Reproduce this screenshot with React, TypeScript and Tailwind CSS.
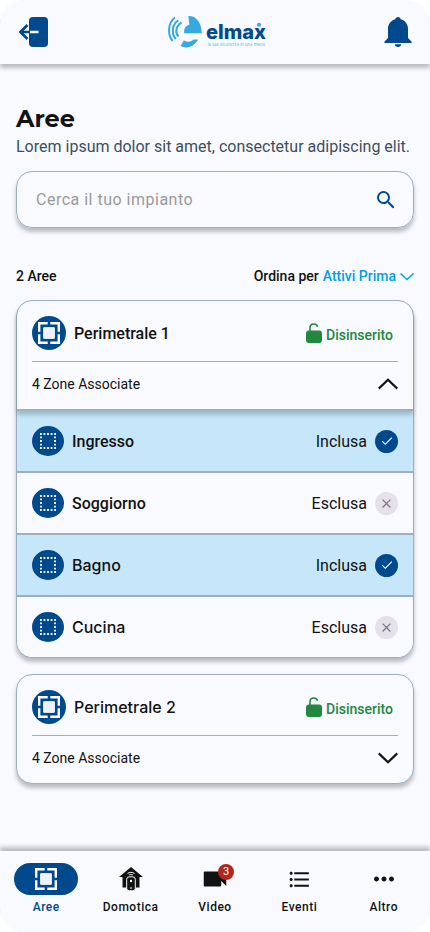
import { useState } from "react";
import clsx from "clsx";
import {
  MdCheck,
  MdClose,
  MdFormatListBulleted,
  MdMoreHoriz,
  MdSearch,
  MdVideocam,
} from "react-icons/md";

type Zone = {
  name: string;
  included: boolean;
  inter?: boolean;
};

const zones: Zone[] = [
  { name: "Ingresso", included: true },
  { name: "Soggiorno", included: false },
  { name: "Bagno", included: true, inter: true },
  { name: "Cucina", included: false, inter: true },
];

const AreaIcon = () => (
  <svg width="24" height="24" viewBox="0 0 24 24" fill="none">
    <path
      d="M10.700 2.200H2.200V10.700M13.300 2.200H21.800V10.700M21.800 13.300V21.800H13.300M10.700 21.800H2.200V13.300"
      stroke="#fff"
      strokeWidth="2.400"
    />
    <path d="M6.700 6.700h10.600v10.600H6.700z" fill="#edf1f9" stroke="#fff" />
  </svg>
);

const ZoneIcon = () => (
  <span className="flex h-[30px] w-8 items-center justify-center rounded-[50%] bg-[#00498d]">
    <svg width="16" height="16" viewBox="0 0 16 16" fill="none">
      <path
        d="M0 1H16M0 15H16"
        stroke="#fff"
        strokeWidth="1.800"
        strokeDasharray="1.800 1.750"
      />
      <path
        d="M1 3.550V13M15 3.550V13"
        stroke="#fff"
        strokeWidth="1.800"
        strokeDasharray="1.800 1.750"
      />
    </svg>
  </span>
);

const LockIcon = () => (
  <svg width="16" height="20" viewBox="0 0 16 20" fill="none">
    <rect y="7.500" width="16" height="12.500" rx="3" fill="#22873f" />
    <path
      d="M4 8V4.800C4 2.400 5.600 1 7.800 1c1.900 0 3.200 1 3.800 2.700"
      stroke="#22873f"
      strokeWidth="1.600"
    />
  </svg>
);

const Chevron = ({ up }: { up?: boolean }) => (
  <svg width="20" height="12" viewBox="0 0 20 12" fill="none">
    <path
      d={up ? "M.7 10.600 10 1.700l9.300 8.900" : "M.7 1.400 10 10.300l9.300-8.900"}
      stroke="#121212"
      strokeWidth="2.200"
    />
  </svg>
);

const Logo = () => (
  <svg className="ml-[3px] overflow-visible" width="100" height="36" viewBox="0 0 100 36">
    <g fill="none" stroke="#36a9e1" strokeWidth="2">
      <path d="M7 3.500C-.5 9-.5 21 4.700 27" />
      <path d="M10.300 6.200C3.500 11 3.500 20 7.700 25" />
      <path d="M13.500 8.700C7.500 12.500 7 18.500 10.500 22.700" />
    </g>
    <path d="M20.300 2C28 1.500 34 9 33.700 19.300H16.300C15.500 15 17.500 12 21.300 10.500Z" fill="#36a9e1" />
    <path d="M16 26.200C19 28.500 22.500 28.200 25.500 25.500H30C27 32 19 35.500 12.500 32Z" fill="#36a9e1" />
    <text
      x="38"
      y="24.500"
      textLength="60"
      lengthAdjust="spacingAndGlyphs"
      fill="#004b8d"
      fontFamily="Inter, sans-serif"
      fontWeight="800"
      fontSize="20"
    >
      elmax
    </text>
    <circle cx="91" cy="10.700" r="2" fill="#36a9e1" />
    <text
      x="39.500"
      y="31.500"
      textLength="57.500"
      lengthAdjust="spacingAndGlyphs"
      fill="#5bbce9"
      fontFamily="Inter, sans-serif"
      fontSize="4.500"
    >
      la tua sicurezza in una mano
    </text>
  </svg>
);

const Header = () => (
  <header className="z-10 flex h-16 shrink-0 items-center justify-between rounded-t-3xl bg-[#f9faff] pr-[18px] pl-[19px] shadow-[0_4px_4px_rgba(0,0,0,0.25)]">
    <button aria-label="Esci">
      <svg width="30" height="30" viewBox="0 0 30 30" fill="none">
        <rect x="10" width="19" height="30" rx="4" fill="#00498d" />
        <path d="M11 15h8.500" stroke="#fff" strokeWidth="2.600" />
        <path d="M1.500 15H11M8.500 8 1.500 15l7 7" stroke="#00498d" strokeWidth="2.700" />
      </svg>
    </button>
    <Logo />
    <button aria-label="Notifiche">
      <svg width="28" height="30" viewBox="0 0 28 30" fill="#00498d">
        <path d="M14 0c1.500 0 2.500 1 2.700 2.200C21 3.500 24 7 24 11.500V21l3.500 3.500V26H.5v-1.500L4 21v-9.500C4 7 7 3.500 11.300 2.200 11.500 1 12.500 0 14 0Z" />
        <path d="M10.700 27.200h6.600c-.3 1.700-1.600 2.800-3.300 2.800s-3-1.100-3.300-2.800Z" />
      </svg>
    </button>
  </header>
);

const ZoneRow = ({ zone, last }: { zone: Zone; last: boolean }) => (
  <div
    className={clsx(
      "flex items-center justify-between px-[15px]",
      zone.included ? "bg-[#c5e7f9]" : "bg-[#f9faff]",
      last ? "h-[60px] rounded-b-2xl" : "h-[62px] border-b-2 border-[#9aafc1]",
    )}
  >
    <div className="flex items-center gap-2">
      <ZoneIcon />
      <span className={clsx("font-medium", zone.inter ? "font-[Inter,sans-serif]" : "pt-px")}>
        {zone.name}
      </span>
    </div>
    <div className="flex items-center gap-2">
      <span className="pt-px">{zone.included ? "Inclusa" : "Esclusa"}</span>
      {zone.included ? (
        <span className="flex size-[23px] items-center justify-center rounded-full bg-[#00498d] text-white">
          <MdCheck size={14} />
        </span>
      ) : (
        <span className="flex size-[23px] items-center justify-center rounded-full bg-[#e6e0e9] text-[#7d7a80]">
          <MdClose size={15} />
        </span>
      )}
    </div>
  </div>
);

type AreaCardProps = {
  title: string;
  items: Zone[];
  defaultOpen?: boolean;
};

const AreaCard = ({ title, items, defaultOpen = false }: AreaCardProps) => {
  const [isOpen, setIsOpen] = useState(defaultOpen);

  return (
    <article className="rounded-2xl border border-[#9aafc1] bg-[#f9faff] shadow-[0_4px_4px_rgba(0,0,0,0.25)]">
      <div
        className={clsx(
          "relative px-[15px]",
          isOpen
            ? "h-[110px] rounded-t-2xl border-b-2 border-[#9aafc1] shadow-[0_4px_4px_rgba(0,0,0,0.2)]"
            : "h-[108px]",
        )}
      >
        <div className="flex h-[61px] items-center justify-between border-b border-[#9aafc1] pt-1 pr-[5px]">
          <div className="flex items-center gap-2">
            <span className="flex size-[34px] items-center justify-center rounded-full bg-[#00498d]">
              <AreaIcon />
            </span>
            <span
              className={clsx("font-medium", defaultOpen ? "pt-px" : "font-[Inter,sans-serif]")}
            >
              {title}
            </span>
          </div>
          <div className="flex items-center gap-1 text-sm font-medium text-[#22873f]">
            <LockIcon />
            <span className="pt-1">Disinserito</span>
          </div>
        </div>
        <button
          className="flex h-11 w-full items-center justify-between text-sm"
          onClick={() => setIsOpen(!isOpen)}
        >
          4 Zone Associate
          <Chevron up={isOpen} />
        </button>
      </div>
      {isOpen &&
        items.map((zone, index) => (
          <ZoneRow key={zone.name} zone={zone} last={index === items.length - 1} />
        ))}
    </article>
  );
};

const HouseIcon = () => (
  <svg width="24" height="24" viewBox="0 0 24 24">
    <path d="M12 0 24 10h-3.500v10.500h-17V10H0Z" fill="#121212" />
    <path
      d="M8.500 6.500c2.200-1.600 4.800-1.600 7 0M10.200 8c1.200-.7 2.400-.7 3.600 0"
      fill="none"
      stroke="#f9faff"
      strokeWidth="1"
    />
    <rect x="7.700" y="9.800" width="8.600" height="14" rx="2.500" fill="#121212" stroke="#f9faff" />
    <circle cx="12" cy="14" r="1.200" fill="#f9faff" />
    <path d="M10.800 21h2.400" stroke="#f9faff" />
  </svg>
);

const navItems = [
  { label: "Aree", icon: <AreaIcon /> },
  { label: "Domotica", icon: <HouseIcon /> },
  { label: "Video", icon: <MdVideocam size={30} />, badge: 3 },
  { label: "Eventi", icon: <MdFormatListBulleted size={25} /> },
  { label: "Altro", icon: <MdMoreHoriz size={30} /> },
];

const BottomNav = () => (
  <nav className="grid h-[81px] shrink-0 grid-cols-5 rounded-b-3xl bg-[#f9faff] px-1 pt-3 shadow-[0_-4px_4px_rgba(0,0,0,0.25)]">
    {navItems.map(({ label, icon, badge }, index) => (
      <a key={label} href="#" className="flex flex-col items-center gap-1">
        <span
          className={clsx(
            "relative flex h-8 w-16 items-center justify-center rounded-full",
            index === 0 && "bg-[#00498d]",
          )}
        >
          {icon}
          {badge && (
            <span className="absolute top-px right-[13px] flex size-4 items-center justify-center rounded-full bg-[#b3261e] text-[11px] leading-4 text-white">
              {badge}
            </span>
          )}
        </span>
        <span
          className={clsx(
            "text-xs leading-4 font-medium tracking-[0.5px]",
            index === 0 && "text-[#00498d]",
          )}
        >
          {label}
        </span>
      </a>
    ))}
  </nav>
);

const App = () => {
  return (
    <div className="flex h-[932px] w-[430px] flex-col overflow-hidden rounded-3xl bg-[#f9faff] font-[Roboto,sans-serif] text-[#121212]">
      <Header />
      <main className="flex-1 px-4 pt-[39px]">
        <h1 className="font-[Montserrat,Inter,sans-serif] text-2xl leading-8 font-bold">Aree</h1>
        <p className="text-base leading-6 whitespace-nowrap text-[#3c4f5f]">
          Lorem ipsum dolor sit amet, consectetur adipiscing elit.
        </p>
        <label className="mt-3 flex h-[57px] items-center justify-between rounded-2xl border border-[#9aafc1] pr-[15px] pl-[19px] shadow-[0_4px_4px_rgba(0,0,0,0.25)]">
          <input
            className="w-64 tracking-[0.5px] outline-none placeholder:text-[#999]"
            placeholder="Cerca il tuo impianto"
          />
          <MdSearch size={24} color="#00498d" />
        </label>
        <div className="mt-[38px] flex h-5 items-center justify-between text-sm font-medium">
          <span>2 Aree</span>
          <button className="flex items-center gap-1">
            Ordina per <span className="text-[#009ee2]">Attivi Prima</span>
            <svg width="14" height="9" viewBox="0 0 14 9" fill="none">
              <path d="m.5 1.500 6.500 6 6.500-6" stroke="#009ee2" strokeWidth="1.500" />
            </svg>
          </button>
        </div>
        <section className="mt-[14px] flex flex-col gap-4">
          <AreaCard title="Perimetrale 1" items={zones} defaultOpen />
          <AreaCard title="Perimetrale 2" items={zones} />
        </section>
      </main>
      <BottomNav />
    </div>
  );
};

export default App;
